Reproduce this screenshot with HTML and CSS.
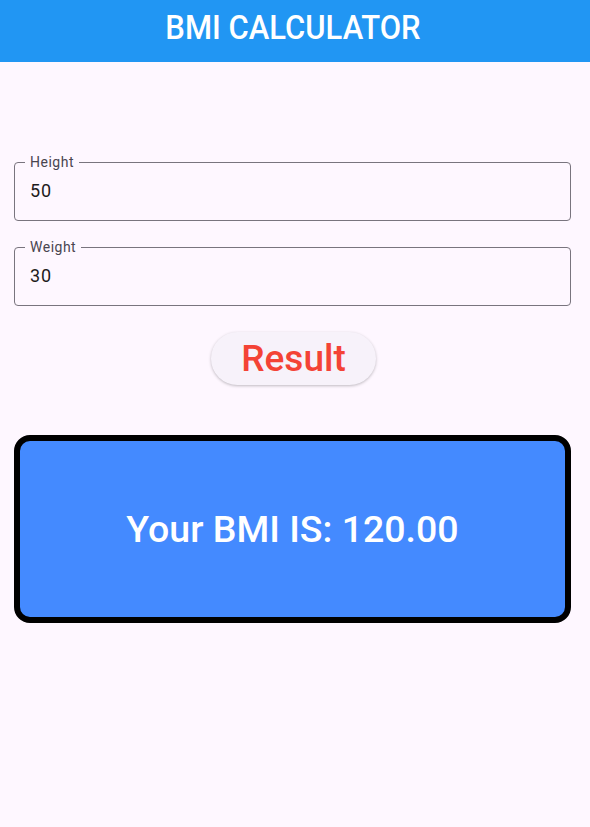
FILE: index.html
```html
<!DOCTYPE html>
<html>
<head>
<meta charset="utf-8">
<link rel="stylesheet" href="styles.css">
</head>
<body>
<header class="appbar"><h1 class="title">BMI CALCULATOR</h1></header>
<main class="content">
  <div class="field field-first">
    <span class="label">Height</span>
    <span class="value">50</span>
  </div>
  <div class="field">
    <span class="label">Weight</span>
    <span class="value">30</span>
  </div>
  <div class="btn-row"><button class="result-btn">Result</button></div>
  <div class="result-box">Your BMI IS: 120.00</div>
</main>
</body>
</html>
```
FILE: styles.css
```css
html, body {
  margin: 0;
  padding: 0;
  background: #fef7ff;
  font-family: Roboto, "Noto Sans", sans-serif;
}
body { width: 590px; height: 827px; overflow: hidden; }
.appbar {
  box-sizing: border-box;
  height: 62px;
  padding-bottom: 8px;
  background: #2196f3;
  display: flex;
  align-items: center;
  justify-content: center;
}
.title {
  margin: 0 4px 0 0;
  color: #fff;
  font-size: 31px;
  font-weight: 500;
  letter-spacing: 0;
  line-height: 1;
  transform: scaleY(1.06);
}
.content {
  display: flex;
  flex-direction: column;
  padding: 0 19px 0 14px;
}
.field {
  position: relative;
  height: 57px;
  border: 1px solid #79747e;
  border-radius: 4px;
  margin-top: 26px;
  display: flex;
  align-items: center;
  padding-left: 15px;
}
.field-first { margin-top: 100px; }
.label {
  position: absolute;
  left: 10px;
  top: -10px;
  padding: 0 5px;
  background: #fef7ff;
  font-size: 14px;
  line-height: 18px;
  color: #49454f;
  letter-spacing: 0.5px;
}
.value {
  font-size: 18px;
  color: #1d1b20;
  letter-spacing: 0.8px;
  margin-top: -2px;
}
.btn-row {
  display: flex;
  justify-content: center;
  margin-top: 26px;
}
.result-btn {
  width: 165px;
  height: 53px;
  border: none;
  border-radius: 27px;
  background: #f7f2fa;
  color: #f44336;
  font-family: Roboto, sans-serif;
  font-size: 37px;
  font-weight: 500;
  box-shadow: 0 1px 3px rgba(0,0,0,0.25);
  padding: 0;
  margin-left: 2px;
}
.result-box {
  margin-top: 50px;
  height: 176px;
  border: 6px solid #000;
  border-radius: 16px;
  background: #448aff;
  display: flex;
  align-items: center;
  justify-content: center;
  color: #fff;
  font-size: 37.5px;
  font-weight: 500;
}
```
